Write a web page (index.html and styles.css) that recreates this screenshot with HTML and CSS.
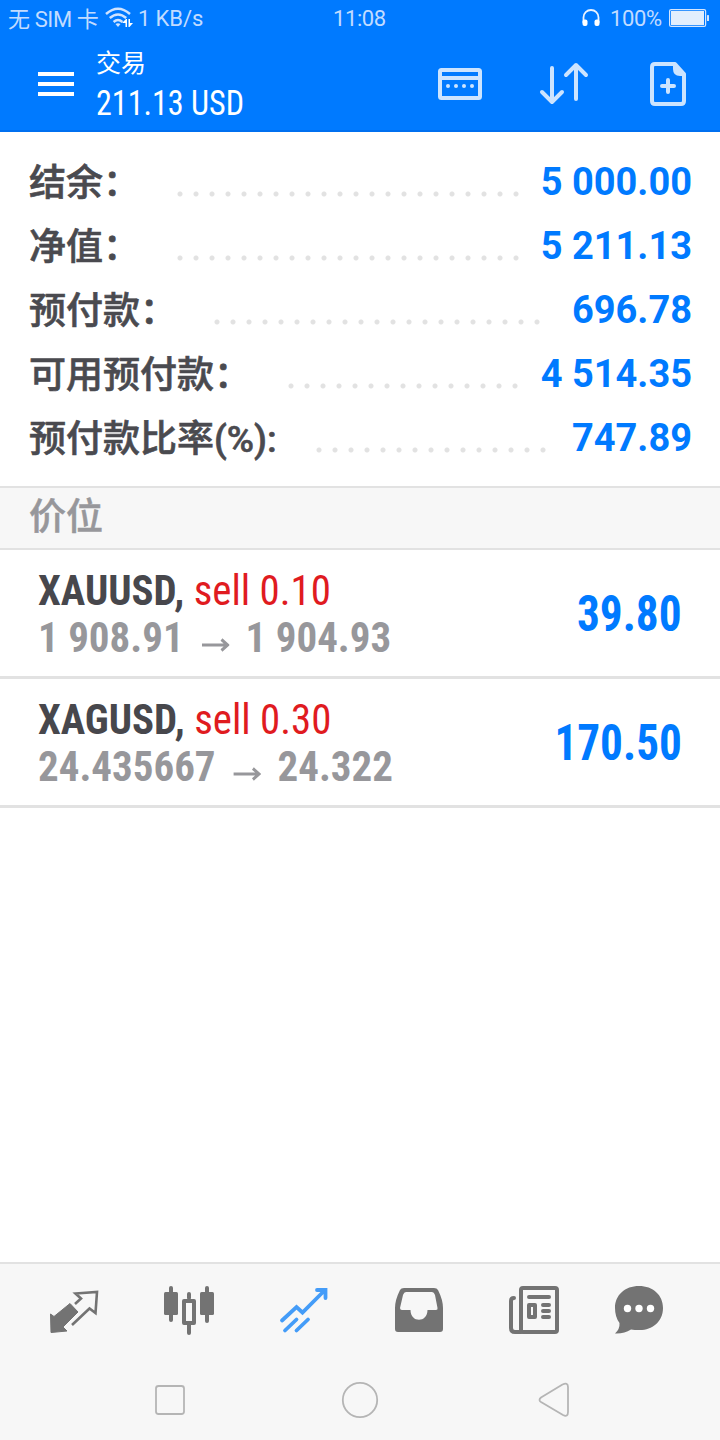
FILE: index.html
```html
<!DOCTYPE html>
<html lang="zh-CN">

<head>
    <title>交易</title>
    <meta charset="utf-8">
    <meta name="viewport" content="width=device-width, initial-scale=1">
    <link rel="stylesheet" href="styles.css">
</head>

<body>
    <div class="screen">
        <div class="status-bar">
            <span class="carrier">无 SIM 卡</span>
            <svg class="wifi" width="28" height="22" viewBox="0 0 28 22">
                <g fill="none" stroke="#cfe3ff" stroke-width="2.500">
                    <path d="M1 7 Q13 -3.500 25 7" />
                    <path d="M4.800 11 Q13 4 21.200 11" />
                    <path d="M8.600 15 Q13 11 17.400 15" />
                </g>
                <path d="M10.500 17 Q13 15.500 15.500 17 L13 20Z" fill="#cfe3ff" />
                <path d="M17 16 L21 12 H22 V20 H20.500 V16 Z M23.500 12 H25 V16 H28 L24.500 20 H23.500 Z" fill="#fff" />
            </svg>
            <span class="speed">1 KB/s</span>
            <span class="clock">11:08</span>
            <svg class="phones" width="18" height="18" viewBox="0 0 18 18">
                <path d="M1.500 14 V8.500 a7.500 7.500 0 0 1 15 0 V14" fill="none" stroke="#e9f2ff" stroke-width="1.800" />
                <rect x="0.500" y="10.500" width="5" height="6.500" rx="2" fill="#fff" />
                <rect x="12.500" y="10.500" width="5" height="6.500" rx="2" fill="#fff" />
            </svg>
            <span class="percent">100%</span>
            <svg class="battery" width="41" height="18" viewBox="0 0 41 18">
                <rect x="0.600" y="0.600" width="36" height="16.800" rx="1.500" fill="none" stroke="#d5e6ff" stroke-width="1.200" />
                <rect x="2" y="2" width="33" height="14" fill="#e2eefd" />
                <rect x="38" y="6" width="2" height="6" rx="0.500" fill="#d5e6ff" />
            </svg>
        </div>

        <div class="header">
            <div class="menu"><i></i><i></i><i></i></div>
            <div class="title">
                <div class="title-name">交易</div>
                <div class="title-sum condensed">211.13 USD</div>
            </div>
            <svg class="tools" width="250" height="48" viewBox="437 60 250 48">
                <g fill="none" stroke="#cce4ff" stroke-width="4" stroke-linecap="round" stroke-linejoin="round">
                    <rect x="440" y="70" width="40" height="28" rx="1.500" />
                    <path d="M440 78 H480" />
                    <path d="M552 68 V101 M542 92 L552 102 L562 92" />
                    <path d="M576 99 V65 M566 75 L576 65 L586 75" />
                    <path d="M675 64 H655 Q652 64 652 67 V101 Q652 104 655 104 H681 Q684 104 684 101 V74 L675 64 Z" />
                    <path d="M662 86 H674 M668 80 V92" />
                </g>
                <path d="M673 63 L685 74 V76 H680 Q673 76 673 69 Z" fill="#cce4ff" />
                <g fill="#cce4ff">
                    <circle cx="448" cy="86" r="2" />
                    <circle cx="456" cy="86" r="2" />
                    <circle cx="464" cy="86" r="2" />
                    <circle cx="472" cy="86" r="2" />
                </g>
            </svg>
        </div>

        <div class="summary">
            <div class="summary-row">
                <span class="label">结余<span class="colon">：</span></span><span class="dots dots-22"></span><span class="value">5 000.00</span>
            </div>
            <div class="summary-row">
                <span class="label">净值<span class="colon">：</span></span><span class="dots dots-22"></span><span class="value">5 211.13</span>
            </div>
            <div class="summary-row">
                <span class="label">预付款<span class="colon">：</span></span><span class="dots dots-21"></span><span class="value">696.78</span>
            </div>
            <div class="summary-row">
                <span class="label">可用预付款<span class="colon">：</span></span><span class="dots dots-15"></span><span class="value">4 514.35</span>
            </div>
            <div class="summary-row">
                <span class="label">预付款比率<span class="latin">(%):</span></span><span class="dots dots-15"></span><span class="value">747.89</span>
            </div>
        </div>

        <div class="section">价位</div>

        <div class="position condensed">
            <div class="deal">
                <div class="symbol">XAUUSD, <span class="sell">sell 0.10</span></div>
                <div class="prices">1 908.91 <svg class="arrow" width="29" height="14" viewBox="0 0 29 14"><path d="M0 7 H27 M20.500 1.500 L27 7 L20.500 12.500" /></svg> 1 904.93</div>
            </div>
            <div class="profit">39.80</div>
        </div>
        <div class="position condensed">
            <div class="deal">
                <div class="symbol">XAGUSD, <span class="sell">sell 0.30</span></div>
                <div class="prices">24.435667 <svg class="arrow" width="29" height="14" viewBox="0 0 29 14"><path d="M0 7 H27 M20.500 1.500 L27 7 L20.500 12.500" /></svg> 24.322</div>
            </div>
            <div class="profit">170.50</div>
        </div>

        <div class="tabs">
            <svg width="720" height="96" viewBox="0 1264 720 96">
                <!-- quotes -->
                <path d="M50.500 1314 L54 1316.500 L70 1303.500 L78 1312 L63 1327 L67 1331 L51 1332.500 Z" fill="#737373" stroke="#737373" stroke-linejoin="round" />
                <path d="M75 1304 L81 1298.500 L75.500 1293.500 L97 1292 L95.500 1313 L89.500 1308.500 L72 1325" fill="none" stroke="#737373" stroke-width="2.600" />
                <!-- chart -->
                <g fill="#737373">
                    <rect x="164" y="1292" width="14" height="23" rx="1.500" />
                    <rect x="169" y="1286" width="4" height="36" rx="2" />
                    <rect x="200" y="1292" width="14" height="23" rx="1.500" />
                    <rect x="205" y="1286" width="4" height="37" rx="2" />
                    <rect x="187" y="1292" width="4" height="8" rx="2" />
                    <rect x="187" y="1323" width="4" height="12" rx="2" />
                </g>
                <rect x="184" y="1301" width="10" height="22" fill="none" stroke="#737373" stroke-width="4" stroke-linejoin="round" />
                <!-- trade -->
                <path d="M282 1320.500 L296.500 1307 L302.500 1312.500 L324 1291 M317 1290 H325.500 V1298 M285 1330.500 L296.500 1319.500 M296.500 1330.500 L308 1319.500" fill="none" stroke="#449cf8" stroke-width="3.800" stroke-linecap="round" />
                <!-- mailbox -->
                <path fill-rule="evenodd" fill="#737373" d="M404 1288 H434 Q437 1288 438 1290 Q443 1300 443 1308 V1329 Q443 1332 440 1332 H398 Q395 1332 395 1329 V1308 Q395 1300 400 1290 Q401 1288 404 1288 Z M406 1292 Q404 1292 403 1295 L400 1308 Q400 1310 402 1310 H410.500 C410.500 1323 427.500 1323 427.500 1310 H436 Q438 1310 437.500 1308 L435 1295 Q434 1292 432 1292 Z" />
                <!-- news -->
                <g fill="none" stroke="#737373" stroke-width="4" stroke-linecap="round" stroke-linejoin="round">
                    <rect x="521" y="1288" width="36" height="44" rx="2" />
                    <path d="M514 1298 Q511 1298 511 1301 V1328 Q511 1332 515 1332 H521" />
                    <path d="M529 1297 H549 M543 1305 H549 M543 1311 H549 M543 1317 H549" />
                    <rect x="529" y="1305" width="6" height="12" />
                </g>
                <!-- messages -->
                <path d="M639 1286 C653 1286 663 1295 663 1308 C663 1322 652 1330 640 1330 Q634 1330 631 1329.500 Q624 1334 615 1333.500 Q620 1329 619.500 1323 Q615 1317 615 1308 C615 1295 625 1286 639 1286 Z" fill="#737373" />
                <g fill="#fff">
                    <circle cx="627.500" cy="1308.500" r="3.700" />
                    <circle cx="639" cy="1308.500" r="3.700" />
                    <circle cx="650.500" cy="1308.500" r="3.700" />
                </g>
            </svg>
        </div>

        <div class="nav-keys">
            <svg width="720" height="80" viewBox="0 1360 720 80">
                <g fill="none" stroke="#b5b5b5" stroke-width="1.800" stroke-linejoin="round">
                    <rect x="156" y="1386" width="28" height="28" rx="2.500" />
                    <circle cx="360" cy="1400" r="17.200" />
                    <path d="M562.500 1384.500 Q568 1382 568 1387 V1412 Q568 1417.500 563 1415 L541 1402 Q538 1400 541 1397.500 Z" />
                </g>
            </svg>
        </div>
    </div>
</body>

</html>
```
FILE: styles.css
```css
body,
html {
    margin: 0;
    padding: 0;
    font-family: Roboto, "Noto Sans CJK SC", sans-serif;
}

.screen {
    width: 720px;
    height: 1440px;
    display: flex;
    flex-direction: column;
    background-color: #ffffff;
}

svg {
    display: block;
    flex: none;
}

.condensed {
    font-family: "Roboto Condensed", Roboto, sans-serif;
    font-stretch: 75%;
}

/* status bar */
.status-bar {
    height: 38px;
    display: grid;
    grid-template-columns: 97px 33px 195px 249px 28px 59px 1fr;
    align-items: center;
    box-sizing: border-box;
    padding: 0 0 2px 8px;
    background-color: #007aff;
    color: #c2dcff;
    font-size: 22px;
    line-height: 38px;
    letter-spacing: -0.4px;
    white-space: nowrap;
}

.status-bar span {
    height: 36px;
}

.status-bar .carrier {
    height: 34px;
}

.speed {
    letter-spacing: -0.1px;
}

/* header */
.header {
    height: 94px;
    box-sizing: border-box;
    display: flex;
    padding: 0 33px 0 38px;
    border-bottom: 2px solid #0070f0;
    background-color: #007aff;
    color: #ffffff;
}

.menu {
    width: 36px;
    padding-top: 34px;
}

.menu i {
    display: block;
    height: 4px;
    margin-bottom: 6px;
    background-color: #ffffff;
}

.title {
    flex: 1;
    margin-left: 22px;
}

.title-name {
    font-size: 25px;
    line-height: 30px;
    padding-top: 11px;
}

.title-sum {
    font-size: 35px;
    line-height: 42px;
    padding-top: 4px;
    white-space: nowrap;
    transform: scaleX(0.917);
    transform-origin: left;
}

.tools {
    margin-top: 22px;
}

/* account summary */
.summary {
    height: 354px;
    box-sizing: border-box;
    padding: 18px 28px 0 29px;
}

.summary-row {
    height: 64px;
    display: flex;
    align-items: center;
    font-weight: bold;
    white-space: nowrap;
}

.label {
    color: #4a4a4f;
    font-size: 37px;
    font-weight: 500;
    line-height: 64px;
    padding-top: 4px;
    -webkit-text-stroke: 0.6px #4a4a4f;
}

.colon {
    display: inline-block;
    width: 37px;
    text-spacing-trim: space-all;
}

.latin {
    margin-right: 2px;
}

.dots {
    height: 6px;
    margin: 23px 0 0 32px;
    background: radial-gradient(circle at 8px 3px, #e2e2e2 2px, transparent 3px) 0 0 / 16px 6px;
}

.dots-22 {
    width: 352px;
}

.dots-21 {
    width: 336px;
}

.dots-15 {
    width: 240px;
}

.value {
    margin-left: auto;
    color: #007aff;
    font-size: 38px;
}

.section {
    height: 64px;
    box-sizing: border-box;
    padding-left: 29px;
    border-top: 2px solid #e2e2e2;
    border-bottom: 2px solid #e2e2e2;
    background-color: #f7f7f7;
    color: #97979b;
    font-size: 37px;
    font-weight: 500;
    line-height: 60px;
    -webkit-text-stroke: 0.5px #97979b;
}

/* positions */
.position {
    height: 129px;
    box-sizing: border-box;
    padding: 2px 38px 0;
    display: flex;
    align-items: center;
    justify-content: space-between;
    border-bottom: 3px solid #e2e2e2;
    font-weight: bold;
    white-space: nowrap;
}

.symbol {
    color: #47474c;
    font-size: 43px;
    line-height: 47px;
    transform: scaleX(0.95);
    transform-origin: left;
}

.sell {
    color: #e01b1f;
    font-weight: normal;
}

.prices {
    display: flex;
    align-items: center;
    color: #97979b;
    font-size: 43px;
    line-height: 47px;
    transform: scaleX(0.953);
    transform-origin: left;
}

.arrow {
    margin: 14px 17px 0 19px;
    fill: none;
    stroke: #97979b;
    stroke-width: 3;
}

.profit {
    color: #007aff;
    font-size: 50px;
    transform: scaleX(0.905);
    transform-origin: right;
}

/* bottom */
.tabs {
    margin-top: auto;
    border-top: 2px solid #e2e2e2;
    background-color: #f7f7f7;
}

.nav-keys {
    background-color: #f7f7f7;
}
```
